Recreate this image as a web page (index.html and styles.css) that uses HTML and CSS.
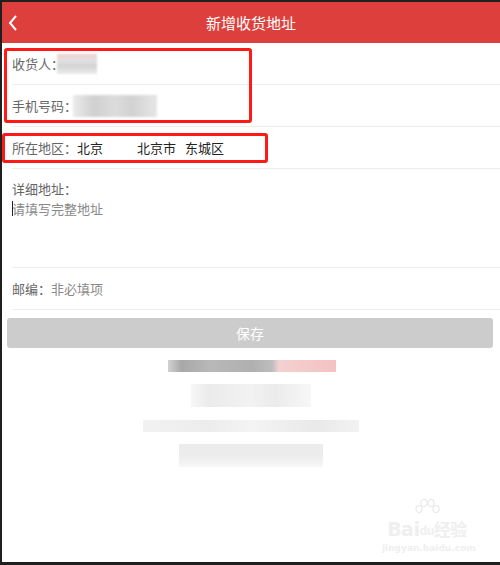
FILE: index.html
```html
<!DOCTYPE html>
<html lang="zh-CN">
<head>
    <meta charset="UTF-8">
    <meta name="viewport" content="width=device-width, initial-scale=1.0">
    <title>新增收货地址</title>
    <link rel="stylesheet" href="styles.css">
</head>
<body>
    <div class="frame">
        <div class="screen">
            <header class="topbar">
                <svg class="back" width="10" height="16" viewBox="0 0 10 16">
                    <path d="M8 1 L2 8 L8 15" fill="none" stroke="#fff" stroke-width="2"/>
                </svg>
                <h1>新增收货地址</h1>
            </header>

            <div class="form">
                <div class="row">
                    <span class="label">收货人：</span>
                    <span class="blur blur-name"></span>
                </div>
                <div class="row">
                    <span class="label">手机号码：</span>
                    <span class="blur blur-phone"></span>
                </div>
                <div class="row">
                    <span class="label">所在地区：</span>
                    <span class="value province">北京</span>
                    <span class="value city">北京市</span>
                    <span class="value">东城区</span>
                </div>
                <div class="row row-address">
                    <span class="label">详细地址：</span>
                    <span class="placeholder"><i class="caret"></i>请填写完整地址</span>
                </div>
                <div class="row">
                    <span class="label">邮编：</span>
                    <span class="placeholder">非必填项</span>
                </div>
            </div>

            <button type="button" class="save">保存</button>

            <div class="footer-blur">
                <div class="fb fb-1"></div>
                <div class="fb fb-2"></div>
                <div class="fb fb-3"></div>
                <div class="fb fb-4"></div>
            </div>

            <div class="watermark">
                <svg class="paw" width="26" height="22" viewBox="0 0 26 22">
                    <g fill="none" stroke="#e8e8e8" stroke-width="1.2">
                        <ellipse cx="5" cy="10" rx="3" ry="3.5"/>
                        <ellipse cx="10" cy="4" rx="3" ry="3.5"/>
                        <ellipse cx="17" cy="4" rx="3" ry="3.5"/>
                        <ellipse cx="22" cy="10" rx="3" ry="3.5"/>
                    </g>
                </svg>
                <div class="wm-logo">Bai<span class="wm-du">du</span><span class="wm-cn">经验</span></div>
                <div class="wm-url">jingyan.baidu.com</div>
            </div>

            <!-- annotation boxes -->
            <div class="mark mark-contact"></div>
            <div class="mark mark-area"></div>
        </div>
    </div>
</body>
</html>
```

FILE: styles.css
```css
* {
    box-sizing: border-box;
    margin: 0;
    padding: 0;
    font-family: "Noto Sans CJK SC", "Noto Sans", sans-serif;
}

body {
    background-color: #1f1f1f;
    width: 500px;
    height: 565px;
    overflow: hidden;
}

.frame {
    height: 565px;
    padding: 2px 0 3px 2px;
}

.screen {
    position: relative;
    height: 100%;
    background-color: #fff;
    overflow: hidden;
}

.topbar {
    height: 41px;
    background-color: #dd403c;
    display: flex;
    align-items: center;
    justify-content: center;
    position: relative;
}

.topbar h1 {
    color: #fff;
    font-size: 15px;
    font-weight: normal;
}

.back {
    position: absolute;
    left: 6px;
    top: 13px;
}

.form {
    display: flex;
    flex-direction: column;
}

.row {
    height: 42px;
    margin-left: 10px;
    border-bottom: 1px solid #ededed;
    display: flex;
    align-items: center;
    font-size: 13px;
}

.label {
    color: #666;
}

.value {
    color: #222;
}

.province {
    width: 60px;
}

.city {
    width: 48px;
}

.placeholder {
    color: #888;
    position: relative;
}

.caret {
    position: absolute;
    left: 0;
    top: 2px;
    width: 1px;
    height: 15px;
    background-color: #222;
}

.row-address {
    height: 99px;
    flex-direction: column;
    align-items: flex-start;
    padding-top: 10px;
    line-height: 20px;
}

.blur {
    display: inline-block;
    filter: blur(1px);
}

.blur-name {
    width: 40px;
    height: 20px;
    margin-left: -7px;
    background: linear-gradient(180deg, #f6cccc 0, #e2e2e2 30%, #d4d4d4 60%, #ececec 100%);
}

.blur-phone {
    width: 84px;
    height: 22px;
    margin-left: -4px;
    background: linear-gradient(90deg, #ebebeb 0, #d0d0d0 25%, #dcdcdc 50%, #d2d2d2 70%, #e6e6e6 100%);
}

.save {
    display: block;
    width: 486px;
    height: 30px;
    margin: 8px 0 0 5px;
    background-color: #cccccc;
    border: none;
    border-radius: 3px;
    color: #fff;
    font-size: 14px;
}

.footer-blur {
    display: flex;
    flex-direction: column;
    align-items: center;
    padding-top: 12px;
}

.fb {
    filter: blur(0.6px);
}

.fb-1 {
    width: 168px;
    height: 12px;
    margin-left: 2px;
    background: linear-gradient(90deg, #d2d2d2 0, #a8a8a8 8%, #b8b8b8 25%, #b0b0b0 50%, #bdbdbd 62%, #f4d0d0 66%, #f4c2c2 100%);
}

.fb-2 {
    width: 120px;
    height: 23px;
    margin-top: 12px;
    background: linear-gradient(90deg, #f7f7f7 0, #ebebeb 15%, #f2f2f2 50%, #ebebeb 70%, #f7f7f7 100%);
}

.fb-3 {
    width: 216px;
    height: 12px;
    margin-top: 13px;
    background: linear-gradient(90deg, #f2f2f2 0, #ececec 30%, #f4f4f4 50%, #e9e9e9 80%, #f2f2f2 100%);
}

.fb-4 {
    width: 144px;
    height: 23px;
    margin-top: 12px;
    background: linear-gradient(180deg, #ececec 0, #ececec 50%, #f7f7f7 100%);
}

.watermark {
    position: absolute;
    right: 28px;
    bottom: 8px;
    width: 90px;
    text-align: center;
    color: #efefef;
    white-space: nowrap;
}

.paw {
    position: absolute;
    left: 32px;
    top: -6px;
}

.wm-logo {
    font-family: "DejaVu Sans", sans-serif;
    font-size: 19px;
    font-weight: bold;
    line-height: 24px;
    padding-top: 12px;
    letter-spacing: -0.5px;
}

.wm-du {
    font-size: 12px;
    vertical-align: 1px;
}

.wm-cn {
    font-family: "Noto Sans CJK SC", sans-serif;
    font-size: 17px;
}

.wm-url {
    font-family: "DejaVu Sans", sans-serif;
    font-size: 9px;
    font-weight: bold;
    line-height: 12px;
}

.mark {
    position: absolute;
    border: 3px solid #ff1a17;
    border-radius: 3px;
}

.mark-contact {
    left: 2px;
    top: 46px;
    width: 248px;
    height: 75px;
}

.mark-area {
    left: 0;
    top: 131px;
    width: 266px;
    height: 30px;
}
```
